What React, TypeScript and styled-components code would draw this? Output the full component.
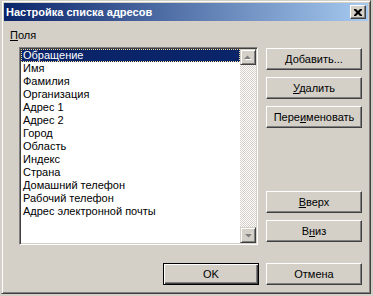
import styled, { createGlobalStyle } from "styled-components";

const GlobalStyle = createGlobalStyle`
    html, body {
        margin: 0;
        padding: 0;
        background: #d4d0c8;
    }
    body {
        font-family: 'Liberation Sans', Arial, sans-serif;
        font-size: 11px;
        color: #000000;
    }
`

const Screen = styled.div`
    width: 373px;
    height: 296px;
    padding-left: 1px;
    box-sizing: border-box;
    overflow: hidden;
`

const Window = styled.div`
    width: 370px;
    height: 294px;
    box-sizing: border-box;
    background: #d4d0c8;
    border: 1px solid;
    border-color: #d4d0c8 #404040 #404040 #d4d0c8;
    box-shadow: inset 1px 1px #ffffff, inset -1px -1px #808080;
    padding: 2px;
    display: flex;
    flex-direction: column;
`

const TitleBar = styled.div`
    height: 18px;
    flex-shrink: 0;
    display: flex;
    align-items: center;
    justify-content: space-between;
    padding: 0 2px 0 2px;
    background: linear-gradient(to right, #0a246a, #a6caf0);
`

const Title = styled.span`
    color: #ffffff;
    font-weight: bold;
    font-size: 11px;
    line-height: 13px;
`

const CloseButton = styled.div`
    width: 16px;
    height: 14px;
    box-sizing: border-box;
    background: #d4d0c8;
    border: 1px solid;
    border-color: #ffffff #404040 #404040 #ffffff;
    box-shadow: inset -1px -1px #808080;
    display: flex;
    align-items: center;
    justify-content: center;
`

const Client = styled.div`
    flex: 1;
    padding: 8px 6px 0 6px;
    display: flex;
    flex-direction: column;
`

const Label = styled.div`
    line-height: 13px;
    height: 13px;
`

const Body = styled.div`
    display: flex;
    gap: 8px;
    margin-top: 5px;
`

const ListBox = styled.div`
    width: 239px;
    height: 198px;
    margin-left: 9px;
    box-sizing: border-box;
    background: #ffffff;
    border: 1px solid;
    border-color: #808080 #ffffff #ffffff #808080;
    box-shadow: inset 1px 1px #404040, inset -1px -1px #d4d0c8;
    padding: 1px;
    display: flex;
`

const Items = styled.div`
    flex: 1;
    display: flex;
    flex-direction: column;
`

const Item = styled.div<{ selected?: boolean }>`
    height: 13px;
    box-sizing: border-box;
    line-height: 11px;
    padding-left: 1px;
    white-space: nowrap;
    border: 1px ${props => props.selected ? 'dotted #f5db95' : 'solid transparent'};
    background: ${props => props.selected ? '#0a246a' : 'transparent'};
    color: ${props => props.selected ? '#ffffff' : '#000000'};
`

const ScrollBar = styled.div`
    width: 16px;
    display: flex;
    flex-direction: column;
`

const ScrollButton = styled.div`
    width: 16px;
    height: 16px;
    flex-shrink: 0;
    box-sizing: border-box;
    background: #d4d0c8;
    border: 1px solid;
    border-color: #d4d0c8 #404040 #404040 #d4d0c8;
    box-shadow: inset 1px 1px #ffffff, inset -1px -1px #808080;
    display: flex;
    align-items: center;
    justify-content: center;
`

const Track = styled.div`
    flex: 1;
    background: repeating-conic-gradient(#d4d0c8 0 25%, #ffffff 0 50%) 0 0 / 2px 2px;
`

const ButtonColumn = styled.div`
    width: 96px;
    height: 198px;
    box-sizing: border-box;
    padding: 1px 0 3px 0;
    display: flex;
    flex-direction: column;
    justify-content: space-between;
`

const ButtonGroup = styled.div`
    display: flex;
    flex-direction: column;
    gap: 7px;
`

const Button = styled.div<{ isDefault?: boolean }>`
    width: 96px;
    height: 22px;
    box-sizing: border-box;
    background: #d4d0c8;
    border: 1px solid;
    border-color: ${props => props.isDefault ? '#000000' : '#ffffff #404040 #404040 #ffffff'};
    box-shadow: ${props => props.isDefault
        ? 'inset 1px 1px #ffffff, inset -1px -1px #404040, inset -2px -2px #808080'
        : 'inset -1px -1px #808080'};
    display: flex;
    align-items: center;
    justify-content: center;
    line-height: 13px;
    white-space: nowrap;
`

const Footer = styled.div`
    display: flex;
    justify-content: flex-end;
    gap: 7px;
    margin-top: 18px;
`

const Key = styled.span`
    text-decoration: underline;
`

const fields = [
    "Обращение",
    "Имя",
    "Фамилия",
    "Организация",
    "Адрес 1",
    "Адрес 2",
    "Город",
    "Область",
    "Индекс",
    "Страна",
    "Домашний телефон",
    "Рабочий телефон",
    "Адрес электронной почты",
]

const Arrow = ({ down }: { down?: boolean }) => (
    <svg width="8" height="5" viewBox="0 0 8 5" style={{ transform: down ? 'rotate(180deg)' : undefined }}>
        {down ? null : <path d="M1 5h7L4.5 1.5z" fill="#ffffff" />}
        <path d="M0 4h7L3.5 0.5z" fill="#808080" />
        {down ? <path d="M0 4.5h1" stroke="#ffffff" /> : null}
    </svg>
)

const App = () => (
    <Screen>
        <GlobalStyle />
        <Window>
            <TitleBar>
                <Title>Настройка списка адресов</Title>
                <CloseButton>
                    <svg width="8" height="7" viewBox="0 0 8 7">
                        <path d="M0 0h2l2 2 2-2h2v1L5.5 3.5 8 6v1H6L4 5 2 7H0V6l2.5-2.5L0 1z" fill="#000000" />
                    </svg>
                </CloseButton>
            </TitleBar>
            <Client>
                <Label><Key>П</Key>оля</Label>
                <Body>
                    <ListBox>
                        <Items>
                            {fields.map((f, i) => (
                                <Item key={f} selected={i === 0}>{f}</Item>
                            ))}
                        </Items>
                        <ScrollBar>
                            <ScrollButton><Arrow /></ScrollButton>
                            <Track />
                            <ScrollButton><Arrow down /></ScrollButton>
                        </ScrollBar>
                    </ListBox>
                    <ButtonColumn>
                        <ButtonGroup>
                            <Button><span><Key>Д</Key>обавить...</span></Button>
                            <Button><span><Key>У</Key>далить</span></Button>
                            <Button><span>Пере<Key>и</Key>меновать</span></Button>
                        </ButtonGroup>
                        <ButtonGroup>
                            <Button><span><Key>В</Key>верх</span></Button>
                            <Button><span>В<Key>н</Key>из</span></Button>
                        </ButtonGroup>
                    </ButtonColumn>
                </Body>
                <Footer>
                    <Button isDefault>OK</Button>
                    <Button>Отмена</Button>
                </Footer>
            </Client>
        </Window>
    </Screen>
)

export default App
